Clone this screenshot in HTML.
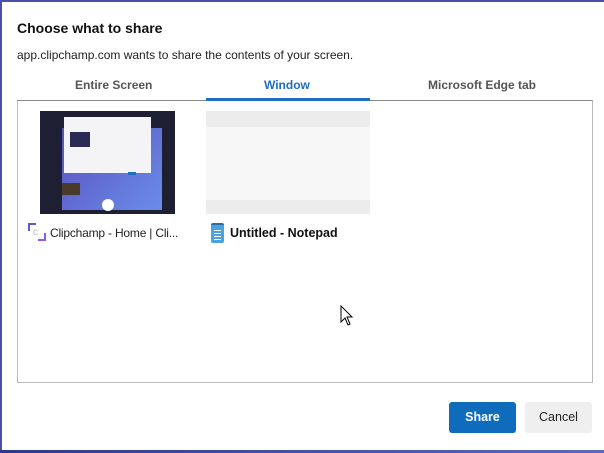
<!DOCTYPE html><html><head><style>
body{margin:0;width:604px;height:453px;background:#4b4fa8;position:relative;overflow:hidden;font-family:"Liberation Sans",sans-serif}
.d{position:absolute;left:2px;top:2px;right:0;bottom:3px;background:#fff}
.a{position:absolute}
</style></head><body>
<div class="a" style="left:0;bottom:0;width:604px;height:3px;background:linear-gradient(90deg,#2b3a8c,#5a6ac0)"></div>
<div class="d"></div>
<div class="a" style="left:17px;top:20px;font-size:14px;font-weight:bold;color:#111">Choose what to share</div>
<div class="a" style="left:17px;top:48px;font-size:12px;color:#222">app.clipchamp.com wants to share the contents of your screen.</div>
<div class="a" style="left:75px;top:78px;font-size:12px;font-weight:bold;color:#555">Entire Screen</div>
<div class="a" style="left:264px;top:78px;font-size:12px;font-weight:bold;color:#1f6fbf">Window</div>
<div class="a" style="left:428px;top:78px;font-size:12px;font-weight:bold;color:#555">Microsoft Edge tab</div>
<div class="a" style="left:17px;top:100px;width:574px;height:281px;border:1px solid #bbb;border-top:1px solid #888"></div>
<div class="a" style="left:206px;top:98px;width:164px;height:3px;background:#1f6fbf"></div>
<div class="a" style="left:40px;top:111px;width:135px;height:103px;background:#1e1f33">
 <div class="a" style="left:22px;top:17px;width:100px;height:82px;background:linear-gradient(135deg,#5a4fc0,#6a8ee8)"></div>
 <div class="a" style="left:24px;top:6px;width:87px;height:56px;background:#f4f4f6"></div>
 <div class="a" style="left:30px;top:21px;width:20px;height:15px;background:#2a2a55"></div>
 <div class="a" style="left:88px;top:61px;width:8px;height:3px;background:#1f6fbf"></div>
 <div class="a" style="left:22px;top:72px;width:18px;height:12px;background:#4a3a2a"></div>
 <div class="a" style="left:62px;top:88px;width:12px;height:12px;border-radius:50%;background:#fff"></div>
</div>
<div class="a" style="left:206px;top:111px;width:164px;height:103px;background:#ececec">
 <div class="a" style="left:0;top:16px;width:164px;height:73px;background:#f7f7f7"></div>
</div>
<div class="a" style="left:28px;top:223px;width:18px;height:18px">
 <div class="a" style="left:0;top:0;width:6px;height:6px;border-left:2px solid #5b5bd6;border-top:2px solid #5b5bd6"></div>
 <div class="a" style="right:0;bottom:0;width:6px;height:6px;border-right:2px solid #9a5bd6;border-bottom:2px solid #9a5bd6"></div>
 <div class="a" style="left:5px;top:4px;font-size:10px;color:#bbb">c</div>
</div>
<div class="a" style="left:50px;top:226px;font-size:12px;color:#222;letter-spacing:-0.2px">Clipchamp - Home | Cli...</div>
<div class="a" style="left:211px;top:223px;width:13px;height:18px;background:#4aa3df;border-radius:2px;border-top:2px solid #2a6fa8">
 <div class="a" style="left:3px;top:5px;width:7px;height:1px;background:#fff;box-shadow:0 3px #fff,0 6px #fff,0 9px #fff"></div>
</div>
<div class="a" style="left:230px;top:226px;font-size:12.5px;font-weight:bold;color:#111">Untitled - Notepad</div>
<svg class="a" style="left:340px;top:305px" width="14" height="22" viewBox="0 0 14 22"><path d="M1 1 L1 17 L5 13 L8 20 L10 19 L7 12 L12 12 Z" fill="#fff" stroke="#000" stroke-width="1"/></svg>
<div class="a" style="left:449px;top:402px;width:67px;height:31px;background:#0f6cbd;border-radius:3px;color:#fff;font-size:12.5px;font-weight:bold;text-align:center;line-height:31px">Share</div>
<div class="a" style="left:525px;top:402px;width:67px;height:31px;background:#efefef;border-radius:3px;color:#222;font-size:12.5px;text-align:center;line-height:31px">Cancel</div>
</body></html>
